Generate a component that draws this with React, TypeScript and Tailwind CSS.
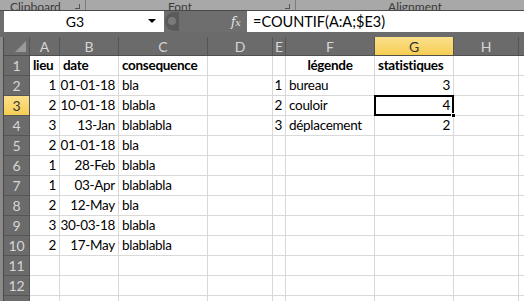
import React from "react";

type Cell = { t: string; b?: boolean; a?: "l" | "r" | "c" };

const columns = [
  { key: "A", w: "w-[30px]", a: "r" },
  { key: "B", w: "w-[59px]", a: "r" },
  { key: "C", w: "w-[89px]", a: "l" },
  { key: "D", w: "w-[65px]", a: "l" },
  { key: "E", w: "w-[13px]", a: "r" },
  { key: "F", w: "w-[89px]", a: "l" },
  { key: "G", w: "w-[79px]", a: "r" },
  { key: "H", w: "w-[65px]", a: "l" },
  { key: "", w: "w-[40px]", a: "l" },
];

const rows: (string | Cell)[][] = [
  [
    { t: "lieu", b: true, a: "l" },
    { t: "date", b: true, a: "l" },
    { t: "consequence", b: true },
    "",
    "",
    { t: "légende", b: true, a: "c" },
    { t: "statistiques", b: true, a: "l" },
  ],
  ["1", "01-01-18", "bla", "", "1", "bureau", "3"],
  ["2", "10-01-18", "blabla", "", "2", "couloir", "4"],
  ["3", "13-Jan", "blablabla", "", "3", "déplacement", "2"],
  ["2", "01-01-18", "bla"],
  ["1", "28-Feb", "blabla"],
  ["1", "03-Apr", "blablabla"],
  ["2", "12-May", "bla"],
  ["3", "30-03-18", "blabla"],
  ["2", "17-May", "blablabla"],
  [],
  [],
  [],
];

const alignClass: Record<string, string> = {
  l: "justify-start pl-[3px]",
  r: "justify-end pr-[3px]",
  c: "justify-center",
};

function GridCell({ cell, col, selected }: { cell?: string | Cell; col: (typeof columns)[number]; selected: boolean }) {
  const c: Cell = typeof cell === "string" ? { t: cell } : cell ?? { t: "" };
  const a = c.a ?? col.a;
  return (
    <div
      className={`relative flex h-full shrink-0 items-end overflow-visible whitespace-nowrap border-r border-b border-[#d9d9d9] pb-[1px] leading-[18px] ${col.w} ${alignClass[a]} ${c.b ? "font-bold" : ""}`}
    >
      <span className="relative z-10">{c.t}</span>
      {selected && (
        <>
          <div className="pointer-events-none absolute -left-[1px] -top-[1px] z-20 h-[21px] w-[80px] border-2 border-black" />
          <div className="absolute -bottom-[3px] -right-[3px] z-30 h-[5px] w-[5px] border border-white bg-black" />
        </>
      )}
    </div>
  );
}

export default function App() {
  return (
    <div className="relative h-[301px] w-[524px] overflow-hidden bg-[#6b6b6b] font-['Lato',sans-serif] text-[13.5px] tracking-[-0.3px] text-black">
      {/* ribbon group labels, clipped at the top */}
      <div className="flex h-[11px] items-end overflow-hidden border-b border-[#4a4a4a] bg-[#a8a8a8] text-[12px] leading-[12px] tracking-normal text-[#3a3a3a]">
        <div className="flex w-[86px] shrink-0 items-end justify-between border-r border-[#7c7c7c] pl-[10px] pr-[5px]">
          <span className="translate-y-[3px]">Clipboard</span>
          <span className="mb-[1px] h-[5px] w-[5px] border-b border-r border-[#555]" />
        </div>
        <div className="flex w-[210px] shrink-0 items-end justify-between border-r border-[#7c7c7c] pr-[5px]">
          <span className="ml-[82px] translate-y-[3px]">Font</span>
          <span className="mb-[1px] h-[5px] w-[5px] border-b border-r border-[#555]" />
        </div>
        <div className="flex flex-1 justify-center">
          <span className="ml-[10px] translate-y-[3px]">Alignment</span>
        </div>
      </div>

      {/* formula bar */}
      <div className="flex h-[21px] items-stretch bg-[#6e6e6e] pl-[4px] tracking-normal">
        <div className="relative flex w-[160px] shrink-0 items-center justify-center bg-white text-[14px]">
          <span className="mr-[18px]">G3</span>
          <span className="absolute right-[8px] top-[8px] h-0 w-0 border-x-[4px] border-t-[4px] border-x-transparent border-t-black" />
        </div>
        <div className="flex w-[83px] shrink-0 items-center">
          <div className="ml-[1px] h-[19px] w-[14px] rounded-l-full bg-[#5a5a5a] pl-[3px] pt-[5px]">
            <div className="h-[8px] w-[8px] rounded-full bg-[#7a7a7a]" />
          </div>
          <span className="ml-auto mr-[6px] font-['DejaVu_Serif',serif] text-[12px] italic text-[#e6e6e6]">
            f<span className="text-[10px]">x</span>
          </span>
        </div>
        <div className="flex flex-1 items-center bg-white pl-[6px] text-[14.5px]">=COUNTIF(A:A;$E3)</div>
      </div>

      {/* sheet */}
      <div className="mt-[5px] flex">
        <div className="w-[4px] shrink-0 border-r border-[#4a4a4a] bg-[#8a8a8a]" />
        <div className="flex-1">
          {/* column headers */}
          <div className="flex h-[19px] border-b border-[#4f4f4f] tracking-normal">
            <div className="relative w-[26px] shrink-0 border-r border-[#555] bg-[#6b6b6b]">
              <div className="absolute bottom-[3px] right-[3px] h-0 w-0 border-b-[11px] border-l-[11px] border-b-[#9a9a9a] border-l-transparent" />
            </div>
            {columns.map((col) => (
              <div
                key={col.key + col.w}
                className={`flex shrink-0 items-center justify-center border-r border-[#555] text-[14px] ${col.w} ${
                  col.key === "G"
                    ? "bg-gradient-to-b from-[#fbe08a] to-[#f6cd52] text-[#333]"
                    : "bg-[#6b6b6b] text-[#d6d6d6]"
                }`}
              >
                {col.key}
              </div>
            ))}
          </div>
          {rows.map((r, i) => (
            <div key={i} className="flex h-[20px] bg-white">
              <div
                className={`flex w-[26px] shrink-0 items-center justify-center border-r border-b border-[#555] text-[14px] tracking-normal ${
                  i === 2 ? "bg-gradient-to-b from-[#fbe08a] to-[#f6cd52] text-[#333]" : "bg-[#6b6b6b] text-[#d6d6d6]"
                }`}
              >
                {i + 1}
              </div>
              {columns.map((col, j) => (
                <GridCell key={j} cell={r[j]} col={col} selected={i === 2 && col.key === "G"} />
              ))}
            </div>
          ))}
        </div>
      </div>
    </div>
  );
}
